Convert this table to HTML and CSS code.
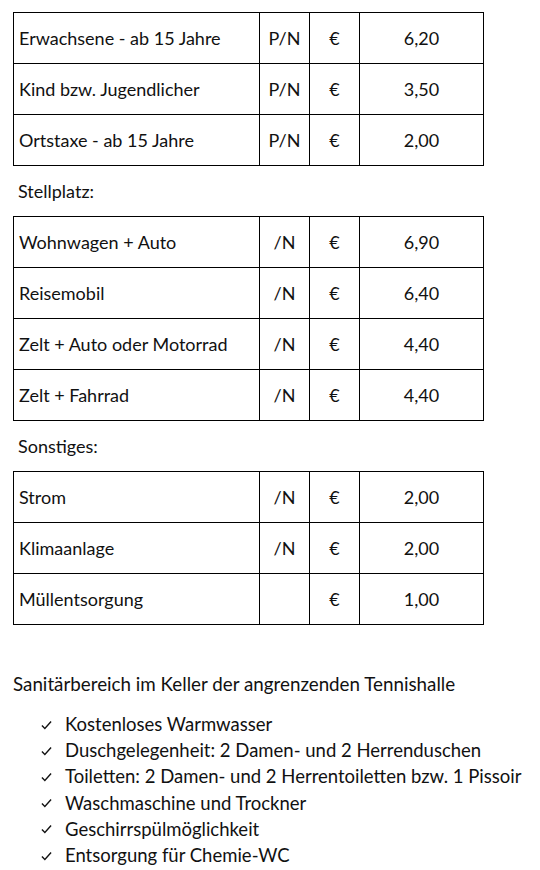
FILE: index.html
```html
<!DOCTYPE html>
<html lang="de">
<head>
<meta charset="utf-8">
<title>Preise</title>
<link rel="stylesheet" href="styles.css">
</head>
<body>
<div class="page">
  <table class="prices">
    <colgroup><col class="c-name"><col class="c-unit"><col class="c-cur"><col class="c-val"></colgroup>
    <tr><td class="name">Erwachsene - ab 15 Jahre</td><td class="unit">P/N</td><td class="cur">€</td><td class="val">6,20</td></tr>
    <tr><td class="name">Kind bzw. Jugendlicher</td><td class="unit">P/N</td><td class="cur">€</td><td class="val">3,50</td></tr>
    <tr><td class="name">Ortstaxe - ab 15 Jahre</td><td class="unit">P/N</td><td class="cur">€</td><td class="val">2,00</td></tr>
  </table>
  <div class="label">Stellplatz:</div>
  <table class="prices">
    <colgroup><col class="c-name"><col class="c-unit"><col class="c-cur"><col class="c-val"></colgroup>
    <tr><td class="name">Wohnwagen + Auto</td><td class="unit">/N</td><td class="cur">€</td><td class="val">6,90</td></tr>
    <tr><td class="name">Reisemobil</td><td class="unit">/N</td><td class="cur">€</td><td class="val">6,40</td></tr>
    <tr><td class="name">Zelt + Auto oder Motorrad</td><td class="unit">/N</td><td class="cur">€</td><td class="val">4,40</td></tr>
    <tr><td class="name">Zelt + Fahrrad</td><td class="unit">/N</td><td class="cur">€</td><td class="val">4,40</td></tr>
  </table>
  <div class="label">Sonstiges:</div>
  <table class="prices">
    <colgroup><col class="c-name"><col class="c-unit"><col class="c-cur"><col class="c-val"></colgroup>
    <tr><td class="name">Strom</td><td class="unit">/N</td><td class="cur">€</td><td class="val">2,00</td></tr>
    <tr><td class="name">Klimaanlage</td><td class="unit">/N</td><td class="cur">€</td><td class="val">2,00</td></tr>
    <tr><td class="name">Müllentsorgung</td><td class="unit"></td><td class="cur">€</td><td class="val">1,00</td></tr>
  </table>
  <p class="intro">Sanitärbereich im Keller der angrenzenden Tennishalle</p>
  <ul class="checks">
    <li><svg class="tick" viewBox="0 0 12 10" width="11" height="10"><path d="M1 5.6 L4.2 8.8 L11 1.2" fill="none" stroke="#111" stroke-width="1.5"/></svg><span>Kostenloses Warmwasser</span></li>
    <li><svg class="tick" viewBox="0 0 12 10" width="11" height="10"><path d="M1 5.6 L4.2 8.8 L11 1.2" fill="none" stroke="#111" stroke-width="1.5"/></svg><span>Duschgelegenheit: 2 Damen- und 2 Herrenduschen</span></li>
    <li><svg class="tick" viewBox="0 0 12 10" width="11" height="10"><path d="M1 5.6 L4.2 8.8 L11 1.2" fill="none" stroke="#111" stroke-width="1.5"/></svg><span>Toiletten: 2 Damen- und 2 Herrentoiletten bzw. 1 Pissoir</span></li>
    <li><svg class="tick" viewBox="0 0 12 10" width="11" height="10"><path d="M1 5.6 L4.2 8.8 L11 1.2" fill="none" stroke="#111" stroke-width="1.5"/></svg><span>Waschmaschine und Trockner</span></li>
    <li><svg class="tick" viewBox="0 0 12 10" width="11" height="10"><path d="M1 5.6 L4.2 8.8 L11 1.2" fill="none" stroke="#111" stroke-width="1.5"/></svg><span>Geschirrspülmöglichkeit</span></li>
    <li><svg class="tick" viewBox="0 0 12 10" width="11" height="10"><path d="M1 5.6 L4.2 8.8 L11 1.2" fill="none" stroke="#111" stroke-width="1.5"/></svg><span>Entsorgung für Chemie-WC</span></li>
  </ul>
</div>
</body>
</html>
```
FILE: styles.css
```css
html, body {
  margin: 0;
  padding: 0;
  background: #ffffff;
}
body {
  font-family: Lato, "Open Sans", sans-serif;
  font-size: 18px;
  color: #111111;
}
.page {
  padding: 12px 0 0 13px;
}
.prices {
  border-collapse: collapse;
  table-layout: fixed;
  width: 471px;
}
.c-name { width: 246px; }
.c-unit { width: 50px; }
.c-cur { width: 50px; }
.c-val { width: 124px; }
.prices td {
  border: 1px solid #000;
  height: 51px;
  padding: 0;
  box-sizing: border-box;
  vertical-align: middle;
  white-space: nowrap;
}
.prices td.name {
  padding-left: 5px;
  text-align: left;
}
.prices td.unit,
.prices td.cur,
.prices td.val {
  text-align: center;
}
.label {
  height: 50px;
  line-height: 50px;
  padding-left: 5px;
}
.intro {
  margin: 46px 0 0 0;
  line-height: 26px;
  font-size: 18.8px;
}
.checks {
  list-style: none;
  margin: 14px 0 0 0;
  padding: 0 0 0 28px;
  font-size: 18.5px;
}
.checks li {
  display: flex;
  align-items: center;
  gap: 13px;
  height: 26.2px;
}
.tick {
  flex: none;
  margin-top: 1px;
}
```
